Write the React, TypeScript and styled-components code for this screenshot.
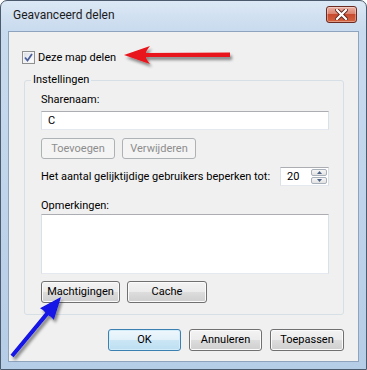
import styled, { createGlobalStyle, css } from "styled-components";

const GlobalStyle = createGlobalStyle`
	html, body {
		margin: 0;
		padding: 0;
		background: #ffffff;
	}
	* {
		box-sizing: border-box;
	}
`;

const Window = styled.div`
	position: relative;
	width: 367px;
	height: 370px;
	border: 1px solid #4b5a6c;
	border-radius: 7px 7px 0 0;
	background: linear-gradient(180deg, #dce8f5 0px, #c9dbee 28px, #b6cde7 100%);
	display: flex;
	flex-direction: column;
	font-family: "Roboto", "Liberation Sans", sans-serif;
	font-size: 11px;
	color: #000;
	overflow: hidden;
`;

const TitleBar = styled.div`
	height: 30px;
	display: flex;
	align-items: center;
	justify-content: space-between;
	padding: 0 9px 3px 12px;
`;

const Title = styled.span`
	font-size: 12px;
	color: #1b1b1b;
`;

const CloseButton = styled.div`
	width: 31px;
	height: 17px;
	border: 1px solid #6b2b22;
	border-radius: 3px;
	background: linear-gradient(180deg, #eab1a4 0%, #dc8470 45%, #c84a30 50%, #d4643f 100%);
	box-shadow: inset 0 0 0 1px rgba(255, 255, 255, 0.35);
	display: flex;
	align-items: center;
	justify-content: center;
`;

const Client = styled.div`
	flex: 1;
	margin: 0 7px 7px 7px;
	border: 1px solid #8ea3bd;
	background: #f0f0f0;
	padding: 17px 14px 0 15px;
	display: flex;
	flex-direction: column;
`;

const CheckRow = styled.label`
	display: flex;
	align-items: center;
	gap: 3px;
	margin-left: -2px;
	height: 16px;
`;

const CheckBox = styled.span`
	width: 13px;
	height: 13px;
	border: 1px solid #8e8f8f;
	background: linear-gradient(135deg, #d8dce4 0%, #f2f3f6 60%, #ffffff 100%);
	box-shadow: inset 0 0 0 1px #f4f4f4;
	display: flex;
	align-items: center;
	justify-content: center;
`;

const Group = styled.div`
	position: relative;
	margin-top: 15px;
	border: 1px solid #d5dfe5;
	border-radius: 3px;
	padding: 11px 14px 11px 16px;
	display: flex;
	flex-direction: column;
`;

const Legend = styled.span`
	position: absolute;
	top: -9px;
	left: 6px;
	padding: 0 2px;
	background: #f0f0f0;
	line-height: 16px;
`;

const Label = styled.div<{ $gap?: number }>`
	line-height: 16px;
	margin-top: ${(p) => p.$gap ?? 0}px;
`;

const TextBox = styled.div<{ $height: number; $gap?: number }>`
	height: ${(p) => p.$height}px;
	margin-top: ${(p) => p.$gap ?? 0}px;
	background: #fff;
	border: 1px solid #dbdfe6;
	border-top-color: #abadb3;
	border-bottom-color: #e3e9ef;
	padding: 1px 6px;
	line-height: 15px;
`;

const ButtonRow = styled.div<{ $gap?: number; $end?: boolean; $spacing?: number }>`
	display: flex;
	gap: ${(p) => p.$spacing ?? 7}px;
	margin-top: ${(p) => p.$gap ?? 0}px;
	justify-content: ${(p) => (p.$end ? "flex-end" : "flex-start")};
`;

const Button = styled.div<{ $width: number; $height?: number; $disabled?: boolean; $default?: boolean }>`
	width: ${(p) => p.$width}px;
	height: ${(p) => p.$height ?? 22}px;
	border: 1px solid #707070;
	border-radius: 3px;
	background: linear-gradient(180deg, #f3f3f3 0%, #ebebeb 50%, #dddddd 50%, #cfcfcf 100%);
	box-shadow: inset 0 0 0 1px #fbfbfb;
	display: flex;
	align-items: center;
	justify-content: center;
	color: #000;
	padding-bottom: 1px;

	${(p) =>
		p.$disabled &&
		css`
			background: #f4f4f4;
			border-color: #adb2b5;
			box-shadow: none;
			color: #8d8d8d;
		`}

	${(p) =>
		p.$default &&
		css`
			border-color: #3c7fb1;
			background: linear-gradient(180deg, #eef7fc 0%, #e1f0f9 50%, #cbe6f5 50%, #bcdff1 100%);
			box-shadow: inset 0 0 0 1px #d2ecfa;
		`}
`;

const LimitRow = styled.div`
	display: flex;
	align-items: center;
	justify-content: space-between;
	margin-top: 8px;
`;

const Spin = styled.div`
	width: 49px;
	height: 19px;
	background: #fff;
	border: 1px solid #dbdfe6;
	border-top-color: #abadb3;
	border-bottom-color: #e3e9ef;
	display: flex;
	align-items: center;
	justify-content: space-between;
	padding: 0 1px 0 6px;
`;

const SpinButtons = styled.div`
	display: flex;
	flex-direction: column;
	gap: 1px;
	width: 16px;
	height: 15px;
`;

const SpinButton = styled.div`
	flex: 1;
	border: 1px solid #a8b0ba;
	border-radius: 2px;
	background: linear-gradient(180deg, #f6f6f6, #e2e2e2);
	display: flex;
	align-items: center;
	justify-content: center;
`;

const Overlay = styled.svg`
	position: absolute;
	left: -1px;
	top: -1px;
	pointer-events: none;
`;

const App = () => {
	return (
		<>
			<GlobalStyle />
			<Window>
				<TitleBar>
					<Title>Geavanceerd delen</Title>
					<CloseButton>
						<svg width="13" height="11" viewBox="0 0 13 11">
							<path d="M2 1 L11 10 M11 1 L2 10" stroke="#5a241c" strokeWidth="4" strokeLinecap="square" />
							<path d="M2 1 L11 10 M11 1 L2 10" stroke="#ffffff" strokeWidth="2.2" strokeLinecap="square" />
						</svg>
					</CloseButton>
				</TitleBar>

				<Client>
					<CheckRow>
						<CheckBox>
							<svg width="9" height="9" viewBox="0 0 9 9">
								<path d="M1 4.5 L3.5 7.5 L8 1" fill="none" stroke="#4b5f9b" strokeWidth="1.8" />
							</svg>
						</CheckBox>
						<span>Deze map delen</span>
					</CheckRow>

					<Group>
						<Legend>Instellingen</Legend>
						<Label>Sharenaam:</Label>
						<TextBox $height={19} $gap={3}>C</TextBox>
						<ButtonRow $gap={8}>
							<Button $width={74} $height={21} $disabled>
								Toevoegen
							</Button>
							<Button $width={74} $height={21} $disabled>
								Verwijderen
							</Button>
						</ButtonRow>
						<LimitRow>
							<span>Het aantal gelijktijdige gebruikers beperken tot:</span>
							<Spin>
								<span>20</span>
								<SpinButtons>
									<SpinButton>
										<svg width="5" height="3" viewBox="0 0 5 3">
											<path d="M0 3 L2.5 0 L5 3 Z" fill="#4d6185" />
										</svg>
									</SpinButton>
									<SpinButton>
										<svg width="5" height="3" viewBox="0 0 5 3">
											<path d="M0 0 L2.5 3 L5 0 Z" fill="#4d6185" />
										</svg>
									</SpinButton>
								</SpinButtons>
							</Spin>
						</LimitRow>
						<Label $gap={12}>Opmerkingen:</Label>
						<TextBox $height={60} />
						<ButtonRow $gap={7} $spacing={7}>
							<Button $width={79}>Machtigingen</Button>
							<Button $width={80}>Cache</Button>
						</ButtonRow>
					</Group>

					<ButtonRow $gap={14} $end $spacing={8}>
						<Button $width={73} $default>
							OK
						</Button>
						<Button $width={73}>Annuleren</Button>
						<Button $width={74}>Toepassen</Button>
					</ButtonRow>
				</Client>

				<Overlay width="367" height="370" viewBox="0 0 367 370">
					<defs>
						<filter id="shadow" x="-20%" y="-40%" width="140%" height="180%">
							<feGaussianBlur in="SourceAlpha" stdDeviation="1.6" />
							<feOffset dx="2" dy="3" result="blur" />
							<feComponentTransfer>
								<feFuncA type="linear" slope="0.45" />
							</feComponentTransfer>
							<feMerge>
								<feMergeNode />
								<feMergeNode in="SourceGraphic" />
							</feMerge>
						</filter>
					</defs>
					<path
						d="M124 55 L150 46 Q146 51 146 53 L230 52.5 L230 57 L146 57 Q146 59 150 64 Z"
						fill="#e8161c"
						filter="url(#shadow)"
					/>
					<path
						d="M61 297 L53.8 319.7 Q50.5 316 48.4 315.2 L13.5 357.3 L10.5 354.7 L45.4 312.6 Q44 310 40 308.2 Z"
						fill="#1212e6"
						filter="url(#shadow)"
					/>
				</Overlay>
			</Window>
		</>
	);
};

export default App;
